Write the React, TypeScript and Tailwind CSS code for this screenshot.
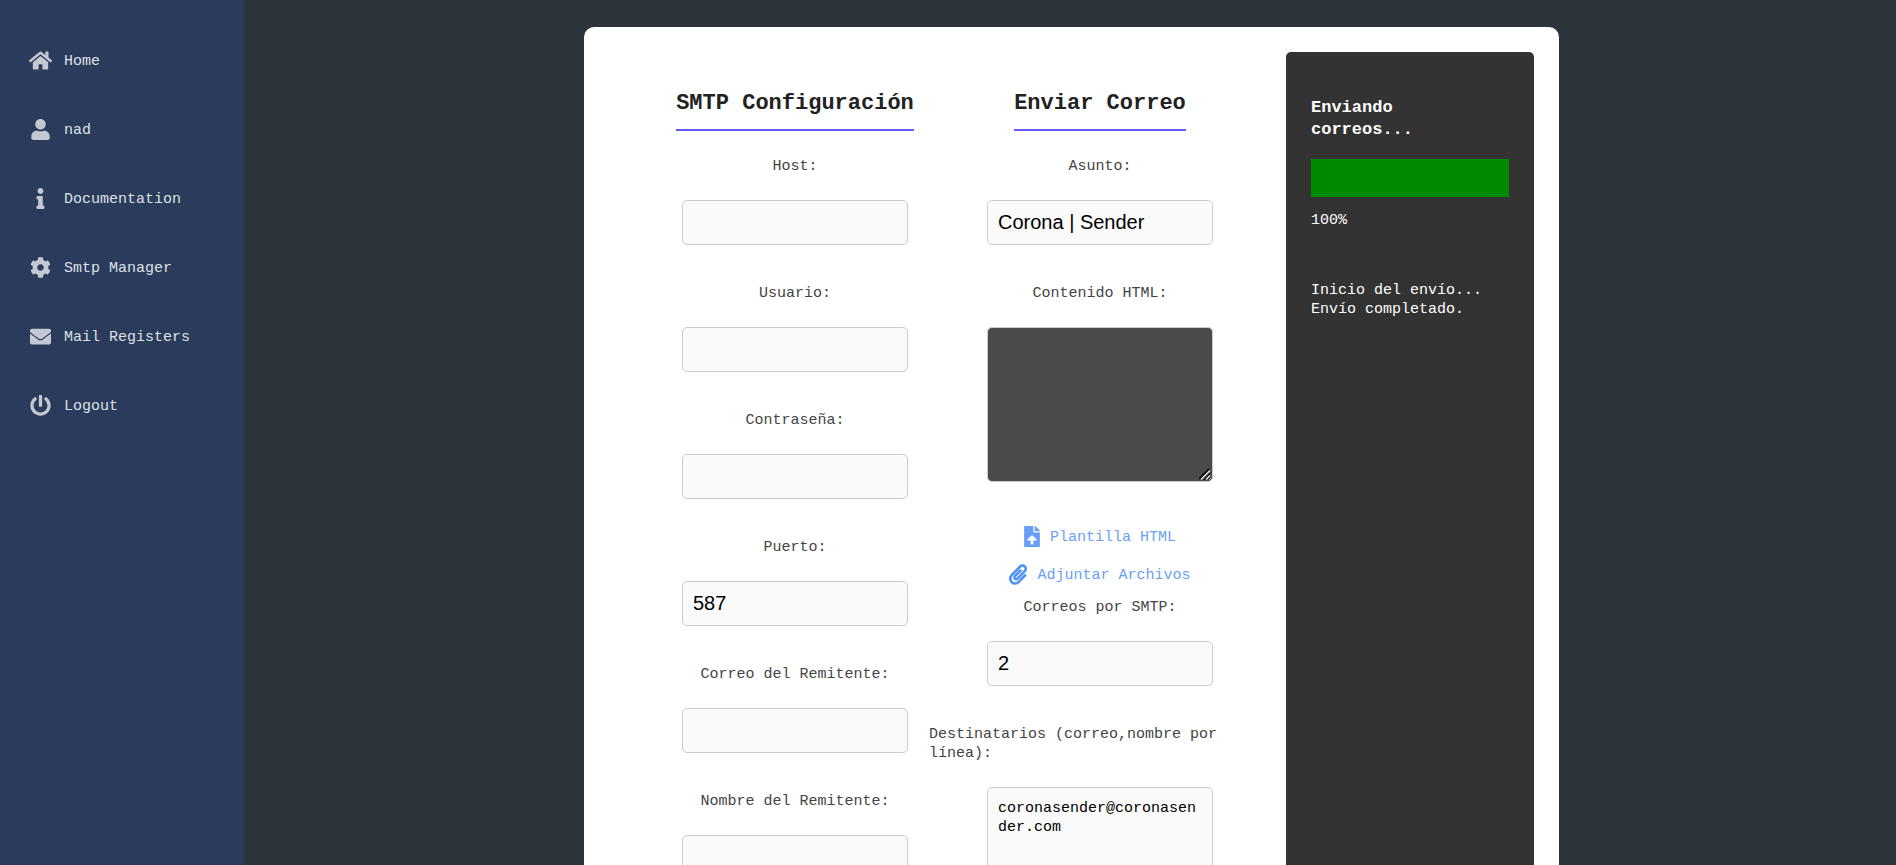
import React from 'react';
import {
  FaHome,
  FaUser,
  FaInfo,
  FaCog,
  FaEnvelope,
  FaPowerOff,
  FaFileUpload,
  FaPaperclip,
} from 'react-icons/fa';

const navItems = [
  { icon: <FaHome size={23} />, label: 'Home' },
  { icon: <FaUser size={21} />, label: 'nad' },
  { icon: <FaInfo size={21} />, label: 'Documentation' },
  { icon: <FaCog size={21} />, label: 'Smtp Manager' },
  { icon: <FaEnvelope size={21} />, label: 'Mail Registers' },
  { icon: <FaPowerOff size={21} />, label: 'Logout' },
];

const smtpFields = [
  { id: 'host', label: 'Host:', type: 'text', value: '' },
  { id: 'user', label: 'Usuario:', type: 'text', value: '' },
  { id: 'password', label: 'Contraseña:', type: 'password', value: '' },
  { id: 'port', label: 'Puerto:', type: 'text', value: '587' },
  { id: 'from-email', label: 'Correo del Remitente:', type: 'email', value: '' },
  { id: 'from-name', label: 'Nombre del Remitente:', type: 'text', value: '' },
];

const Sidebar: React.FC = () => (
  <aside className="w-[244px] shrink-0 bg-[#2b3b5b] pt-[26px]">
    <nav className="flex flex-col">
      {navItems.map((item) => (
        <a key={item.label} href="#" className="flex h-[69px] items-center pl-7 text-[#dde1e8]">
          <span className="flex w-6 justify-center text-[#c3c8d2]">{item.icon}</span>
          <span className="ml-3 pt-0.5">{item.label}</span>
        </a>
      ))}
    </nav>
  </aside>
);

const Heading: React.FC<{ children: React.ReactNode }> = ({ children }) => (
  <h2 className="mt-[37px] mb-[26px] overflow-hidden border-b-2 border-[#635bff] pb-2.5 text-[22px] leading-[30px] font-bold whitespace-nowrap text-[#222]">
    {children}
  </h2>
);

const Field: React.FC<{
  id: string;
  label: string;
  children: React.ReactNode;
}> = ({ id, label, children }) => (
  <div className="mb-[39px] flex w-full flex-col items-center">
    <label htmlFor={id} className="mb-6 text-[#444]">
      {label}
    </label>
    {children}
  </div>
);

const inputClass =
  'h-[45px] w-[226px] rounded-[5px] border border-[#ccc] bg-[#fafafa] px-2.5 font-["Liberation_Sans",Arial,sans-serif] text-xl text-black';

const ProgressPanel: React.FC<{ percent: number }> = ({ percent }) => (
  <section className="w-[248px] shrink-0 rounded-[5px] bg-[#333] p-[25px] text-white">
    <h3 className="mt-5 pr-5 text-[17px] leading-[22px] font-bold">Enviando correos...</h3>
    <div
      role="progressbar"
      aria-valuenow={percent}
      aria-valuemin={0}
      aria-valuemax={100}
      className="mt-[18px] h-[38px] bg-[#222]"
    >
      <div className="h-full bg-[#008a00]" style={{ width: `${percent}%` }} />
    </div>
    <p className="mt-3.5">{percent}%</p>
    <div className="mt-[51px]">
      <p>Inicio del envío...</p>
      <p>Envío completado.</p>
    </div>
  </section>
);

const App: React.FC = () => {
  return (
    <div className='flex h-screen overflow-hidden bg-[#2d333a] font-["Liberation_Mono",monospace] text-[15px] leading-[19px]'>
      <Sidebar />

      <main className="flex-1 overflow-hidden pt-[27px] pr-[21px] pl-6">
        <div className="mx-auto flex max-w-[975px] rounded-[10px] bg-white p-[25px]">
          {/* SMTP settings */}
          <form className="ml-[66px] flex w-[240px] shrink-0 flex-col items-center">
            <Heading>SMTP Configuración</Heading>
            {smtpFields.map((field) => (
              <Field key={field.id} id={field.id} label={field.label}>
                <input id={field.id} type={field.type} defaultValue={field.value} className={inputClass} />
              </Field>
            ))}
          </form>

          {/* Mail form */}
          <form className="mr-[15px] ml-3.5 flex flex-1 flex-col items-center">
            <Heading>Enviar Correo</Heading>
            <Field id="subject" label="Asunto:">
              <input id="subject" type="text" defaultValue="Corona | Sender" className={inputClass} />
            </Field>
            <Field id="html" label="Contenido HTML:">
              <div className="relative">
                <textarea
                  id="html"
                  className="block h-[155px] w-[226px] rounded-[5px] border border-[#ccc] bg-[#4b4a48] p-2.5 text-white"
                />
                {/* Resize grip */}
                <svg
                  viewBox="0 0 12 12"
                  className="pointer-events-none absolute right-0.5 bottom-0.5 size-3"
                  fill="none"
                  aria-hidden="true"
                >
                  <path d="M0 11L10 1M5 12L11 6" stroke="#111" strokeWidth="2" />
                  <path d="M2 11.5L11 2.5M7 11.5L11 7.5" stroke="#ddd" strokeWidth="1.5" />
                </svg>
              </div>
            </Field>

            <div className="-mt-1 flex flex-col items-center pb-[5px] text-[#6a9ff8]">
              <button type="button" className="flex h-[38px] items-center gap-2.5">
                <FaFileUpload className="h-[21px] w-4" />
                <span className="pt-0.5">Plantilla HTML</span>
              </button>
              <button type="button" className="flex h-[38px] items-center gap-2.5">
                <FaPaperclip className="h-[21px] w-[18px] text-[#4d94f7]" />
                <span className="pt-0.5">Adjuntar Archivos</span>
              </button>
            </div>

            <Field id="per-smtp" label="Correos por SMTP:">
              <input id="per-smtp" type="text" defaultValue="2" className={inputClass} />
            </Field>
            <Field id="recipients" label="Destinatarios (correo,nombre por línea):">
              <textarea
                id="recipients"
                defaultValue="coronasender@coronasender.com"
                className="block h-[155px] w-[226px] rounded-[5px] border border-[#ccc] bg-[#fafafa] p-2.5 pt-[11px] break-all text-black"
              />
            </Field>
          </form>

          <ProgressPanel percent={100} />
        </div>
      </main>
    </div>
  );
};

export default App;
